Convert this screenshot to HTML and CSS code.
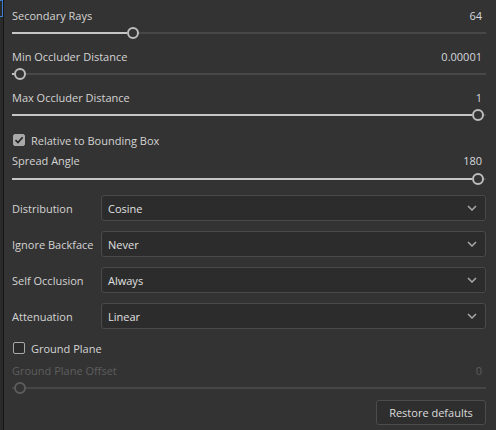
FILE: index.html
```html
<!DOCTYPE html>
<html lang="en">
<head>
    <meta charset="UTF-8">
    <title>Ambient Occlusion Settings</title>
    <link rel="stylesheet" href="styles.css">
</head>
<body>
    <div class="window">
        <div class="gutter"><div class="gutter-mark"></div></div>
        <div class="panel">
            <div class="slider">
                <div class="slider-head"><span>Secondary Rays</span><span class="value">64</span></div>
                <div class="track"><div class="fill" style="width:115px"></div><div class="thumb"></div><div class="rest"></div></div>
            </div>
            <div class="slider">
                <div class="slider-head"><span>Min Occluder Distance</span><span class="value">0.00001</span></div>
                <div class="track"><div class="fill" style="width:2px"></div><div class="thumb"></div><div class="rest"></div></div>
            </div>
            <div class="slider">
                <div class="slider-head"><span>Max Occluder Distance</span><span class="value">1</span></div>
                <div class="track"><div class="fill" style="width:460px"></div><div class="thumb"></div><div class="rest"></div></div>
            </div>

            <label class="check-row">
                <span class="box checked">
                    <svg width="10" height="10" viewBox="0 0 10 10"><path d="M1.5 5.2 L4 7.6 L8.6 2.2" fill="none" stroke="#262626" stroke-width="1.7"/></svg>
                </span>
                Relative to Bounding Box
            </label>

            <div class="slider spread">
                <div class="slider-head"><span>Spread Angle</span><span class="value">180</span></div>
                <div class="track"><div class="fill" style="width:460px"></div><div class="thumb"></div><div class="rest"></div></div>
            </div>

            <div class="selects">
                <div class="field">
                    <span class="field-label">Distribution</span>
                    <div class="select"><span>Cosine</span><svg class="chev" width="10" height="6" viewBox="0 0 10 6"><path d="M1 1 L5 5 L9 1" fill="none" stroke="#a8a8a8" stroke-width="1.5"/></svg></div>
                </div>
                <div class="field">
                    <span class="field-label">Ignore Backface</span>
                    <div class="select"><span>Never</span><svg class="chev" width="10" height="6" viewBox="0 0 10 6"><path d="M1 1 L5 5 L9 1" fill="none" stroke="#a8a8a8" stroke-width="1.5"/></svg></div>
                </div>
                <div class="field">
                    <span class="field-label">Self Occlusion</span>
                    <div class="select"><span>Always</span><svg class="chev" width="10" height="6" viewBox="0 0 10 6"><path d="M1 1 L5 5 L9 1" fill="none" stroke="#a8a8a8" stroke-width="1.5"/></svg></div>
                </div>
                <div class="field">
                    <span class="field-label">Attenuation</span>
                    <div class="select"><span>Linear</span><svg class="chev" width="10" height="6" viewBox="0 0 10 6"><path d="M1 1 L5 5 L9 1" fill="none" stroke="#a8a8a8" stroke-width="1.5"/></svg></div>
                </div>
            </div>

            <label class="check-row ground">
                <span class="box"></span>
                Ground Plane
            </label>

            <div class="slider disabled">
                <div class="slider-head"><span>Ground Plane Offset</span><span class="value">0</span></div>
                <div class="track"><div class="fill" style="width:2px"></div><div class="thumb"></div><div class="rest"></div></div>
            </div>

            <div class="footer">
                <button class="restore">Restore defaults</button>
            </div>
        </div>
    </div>
</body>
</html>
```

FILE: styles.css
```css
* { margin: 0; padding: 0; box-sizing: border-box; }
body { width: 496px; height: 430px; background: #333333; font-family: "Open Sans", "Noto Sans", sans-serif; font-size: 11px; color: #d4d4d4; overflow: hidden; }
.window { display: flex; height: 430px; }
.gutter { width: 4px; background: #2a2a2a; border-right: 1px solid #161616; flex: none; }
.gutter-mark { height: 17px; border: 1px solid #3b7fd4; border-left: none; }
.panel { flex: 1; padding: 6px 10px 0 8px; }

.slider { margin-bottom: 7px; }
.slider-head { display: flex; justify-content: space-between; align-items: center; height: 18px; }
.value { color: #d3d8de; padding-right: 4px; }
.track { display: flex; align-items: center; height: 15px; margin-top: 1px; }
.fill { height: 2px; background: #c6c6c6; flex: none; }
.rest { flex: 1; height: 2px; background: #484848; }
.thumb { width: 12px; height: 12px; border: 2px solid #bdbdbd; border-radius: 50%; background: #333333; flex: none; }

.check-row { display: flex; align-items: center; gap: 6px; height: 22px; padding-left: 1px; }
.box { width: 12px; height: 12px; border: 1px solid #a9a9a9; border-radius: 2px; background: #2b2b2b; display: flex; align-items: center; justify-content: center; }
.box.checked { background: #a9a9a9; }

.spread { margin-top: 0; margin-bottom: 9px; }
.spread .track { margin-top: 2px; }

.selects { display: flex; flex-direction: column; gap: 10px; }
.field { display: flex; align-items: center; }
.field-label { width: 89px; flex: none; }
.select { flex: 1; height: 26px; border: 1px solid #4a4a4a; border-radius: 3px; background: #2c2c2c; display: flex; align-items: center; justify-content: space-between; padding: 0 8px 0 6px; color: #e0e0e0; }
.chev { display: block; }

.ground { margin-top: 6px; height: 26px; }

.disabled { color: #5e5e5e; margin-bottom: 5px; }
.disabled .value { color: #5e5e5e; }
.disabled .fill, .disabled .rest { background: #464646; }
.disabled .thumb { border-color: #5c5c5c; }

.footer { display: flex; justify-content: flex-end; }
.restore { width: 110px; height: 25px; border: 1px solid #4c4c4c; border-radius: 3px; background: #2e2e2e; color: #dcdcdc; font-family: inherit; font-size: 11px; }
```
